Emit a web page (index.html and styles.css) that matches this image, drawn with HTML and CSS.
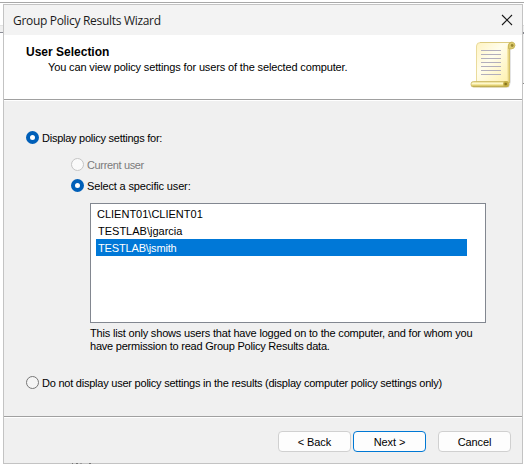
FILE: index.html
```
<!DOCTYPE html>
<html lang="en">
<head>
<meta charset="utf-8">
<title>Group Policy Results Wizard</title>
<link rel="stylesheet" href="styles.css">
</head>
<body>
<div class="backdrop"><i class="edge top"></i><i class="edge left"></i><i class="edge right"></i></div>
<main class="window">
  <header class="titlebar">
    <span class="title">Group Policy Results Wizard</span>
    <svg class="close" width="12" height="12" viewBox="0 0 12 12"><path d="M1 1l10 10M11 1L1 11" stroke="#191919" stroke-width="1.1" fill="none"/></svg>
  </header>
  <section class="heading">
    <div class="heading-text">
      <h1>User Selection</h1>
      <p class="subtitle">You can view policy settings for users of the selected computer.</p>
    </div>
    <svg class="scroll" width="46" height="48" viewBox="0 0 46 48">
      <defs>
        <linearGradient id="paper" x1="0" y1="0" x2="1" y2="1"><stop offset="0" stop-color="#fff3c0"/><stop offset=".4" stop-color="#fffdec"/><stop offset="1" stop-color="#ffefa8"/></linearGradient>
        <linearGradient id="roll" x1="0" y1="0" x2="0" y2="1"><stop offset="0" stop-color="#e0d07c"/><stop offset=".35" stop-color="#fff9cf"/><stop offset=".65" stop-color="#eddd82"/><stop offset="1" stop-color="#a99637"/></linearGradient>
        <linearGradient id="side" x1="0" y1="0" x2="1" y2="0"><stop offset="0" stop-color="#fff2b5"/><stop offset="1" stop-color="#cdb75a"/></linearGradient>
      </defs>
      <path d="M8 44V5.500Q8 2 12 2H41V41L39 46.500H10Z" fill="#c8c8c8" opacity=".5"/>
      <path d="M6.500 41V5Q6.500 1.500 10.500 1.500H42Q39.500 3 39.500 8V41Z" fill="url(#paper)" stroke="#eadb9c" stroke-width="1"/>
      <path d="M37 8Q37 3 40 2L40 8V42H37Z" fill="url(#side)"/>
      <path d="M10 1.500H42" stroke="#dccb80"/>
      <path d="M38.500 7.500V4Q39 1 42 1Q45 1.500 45 4.500Q44.500 8 41 8Z" fill="#dccb70" stroke="#c4b152" stroke-width=".8"/>
      <circle cx="42.200" cy="4.500" r="1.400" fill="#9a8833"/>
      <rect x="1" y="40.500" width="38" height="5.500" rx="2.500" fill="url(#roll)" stroke="#cbb964" stroke-width=".8"/>
      <circle cx="36" cy="43" r="2.900" fill="#c3ae45"/><circle cx="35.700" cy="43" r="1.300" fill="#87731f"/>
      <path d="M11 9.500H31M11 13.500H31M11 17.500H31M11 21.500H31M11 25.500H31M11 29.500H31M11 33.500H31" stroke="#b2aebc"/>
    </svg>
  </section>
  <section class="content">
    <div class="option display"><i class="radio checked"></i><span class="t-display">Display policy settings for:</span></div>
    <div class="nested">
      <div class="option current"><i class="radio disabled"></i><span class="t-current">Current user</span></div>
      <div class="option specific"><i class="radio checked"></i><span class="t-specific">Select a specific user:</span></div>
      <div class="users">
        <div class="user"><span class="t-client">CLIENT01\CLIENT01</span></div>
        <div class="user"><span>TESTLAB\jgarcia</span></div>
        <div class="user selected"><span class="t-smith">TESTLAB\jsmith</span></div>
      </div>
      <p class="note"><span class="note-a">This list only shows users that have logged on to the computer, and for whom you</span><br><span class="note-b">have permission to read Group Policy Results data.</span></p>
    </div>
    <div class="option none"><i class="radio"></i><span class="t-none">Do not display user policy settings in the results (display computer policy settings only)</span></div>
  </section>
  <footer class="actions">
    <button>&lt; Back</button><button class="primary">Next &gt;</button><button class="cancel">Cancel</button>
  </footer>
</main>
<i class="specks"></i>
</body>
</html>
```
FILE: styles.css
```
* { box-sizing: border-box; }
body {
  margin: 0; width: 524px; height: 464px; overflow: hidden;
  position: relative; background: #fff; color: #000;
  font: 11px/13px "Liberation Sans", sans-serif; white-space: nowrap;
}
h1, p { margin: 0; }
.backdrop .edge { position: absolute; }
.top { left: 0; top: 2px; width: 524px; height: 1px; background: #a8a8a8; }
.left { left: 0; top: 25px; width: 4px; height: 8px; background: #f0f0f0; border-top: 1px solid #e3e3e3; border-bottom: 1px solid #8b8d96; }
.right { right: 0; top: 25px; width: 2px; height: 59px; background: #f0f0f0; border-top: 1px solid #ddd; border-bottom: 1px solid #888; }
.right::after { content: ""; display: block; margin-top: 6px; height: 2px; background: #85878e; }
.specks {
  position: absolute; left: 72px; top: 463px; width: 19px; height: 1px;
  background: linear-gradient(90deg, #777 0 1px, transparent 1px 4px, #777 4px 6px, transparent 6px 8px, #999 8px 10px, transparent 10px 17px, #777 17px);
}

.window {
  position: relative; width: 520px; height: 460px; margin: 4px 0 0 3px;
  border: 1px solid #c3c3c3; background: #f0f0f0;
  display: flex; flex-direction: column;
}
.titlebar { height: 30px; flex: none; background: #f3f3f3; display: flex; align-items: center; justify-content: space-between; padding: 0 9px; }
.close { margin-top: -1px; }
.title { padding-top: 1px; font: 12px/16px "Open Sans", sans-serif; letter-spacing: -.31px; color: #1b1b1b; }
.heading { height: 66px; flex: none; background: #fff; border-bottom: 1px solid #fff; box-shadow: inset 0 -1px #a0a0a0; display: flex; justify-content: space-between; padding: 6px 6px 0 22px; }
.heading-text { padding-top: 5px; }
h1 { font-size: 12px; line-height: 13px; }
.subtitle { margin: 2px 0 0 22px; letter-spacing: -.14px; }

.content { height: 316px; flex: none; padding: 30px 0 0 22px; box-shadow: inset 0 -1px #a0a0a0; }
.option { display: flex; align-items: center; gap: 3px; height: 13px; }
.option span { padding-top: 2px; }
.radio { width: 13px; height: 13px; flex: none; border: 1px solid #767676; border-radius: 50%; background: #f5f5f5; }
.radio.checked { border: 4px solid #005fb8; background: #fff; }
.radio.disabled { border-color: #c5c5c5; background: #fafafa; }
.nested { padding-left: 45px; }
.current { margin-top: 14px; color: #7b7b7b; }
.specific { margin-top: 8px; }
.t-display { letter-spacing: -.25px; }
.t-current { letter-spacing: -.35px; }
.t-specific { letter-spacing: -.15px; }
.t-none { letter-spacing: -.23px; }
.users { width: 396px; height: 120px; margin: 11px 0 0 19px; border: 1px solid #828790; background: #fff; padding: 1px 18px 0 5px; }
.user { height: 17px; line-height: 17px; padding: 1px 0 0 2px; }
.user:first-child { padding-left: 1px; }
.t-smith { letter-spacing: -.15px; }
.selected { background: #0078d7; color: #fff; }
.note { margin: 4px 0 0 19px; }
.note-a { letter-spacing: -.18px; }
.note-b { letter-spacing: -.22px; }
.none { margin-top: 23px; }

.actions { flex: 1; display: flex; align-items: flex-start; justify-content: flex-end; padding: 14px 11px 0 0; box-shadow: inset 0 1px #fff; }
button { width: 73px; height: 21px; padding: 1px 0 0; margin: 0; border: 1px solid #d0d0d0; border-radius: 4px; background: #fdfdfd; color: #000; font: 11px/13px "Liberation Sans", sans-serif; letter-spacing: -.1px; }
.primary { margin-left: 2px; border-color: #0078d4; }
.cancel { margin-left: 12px; }
```
